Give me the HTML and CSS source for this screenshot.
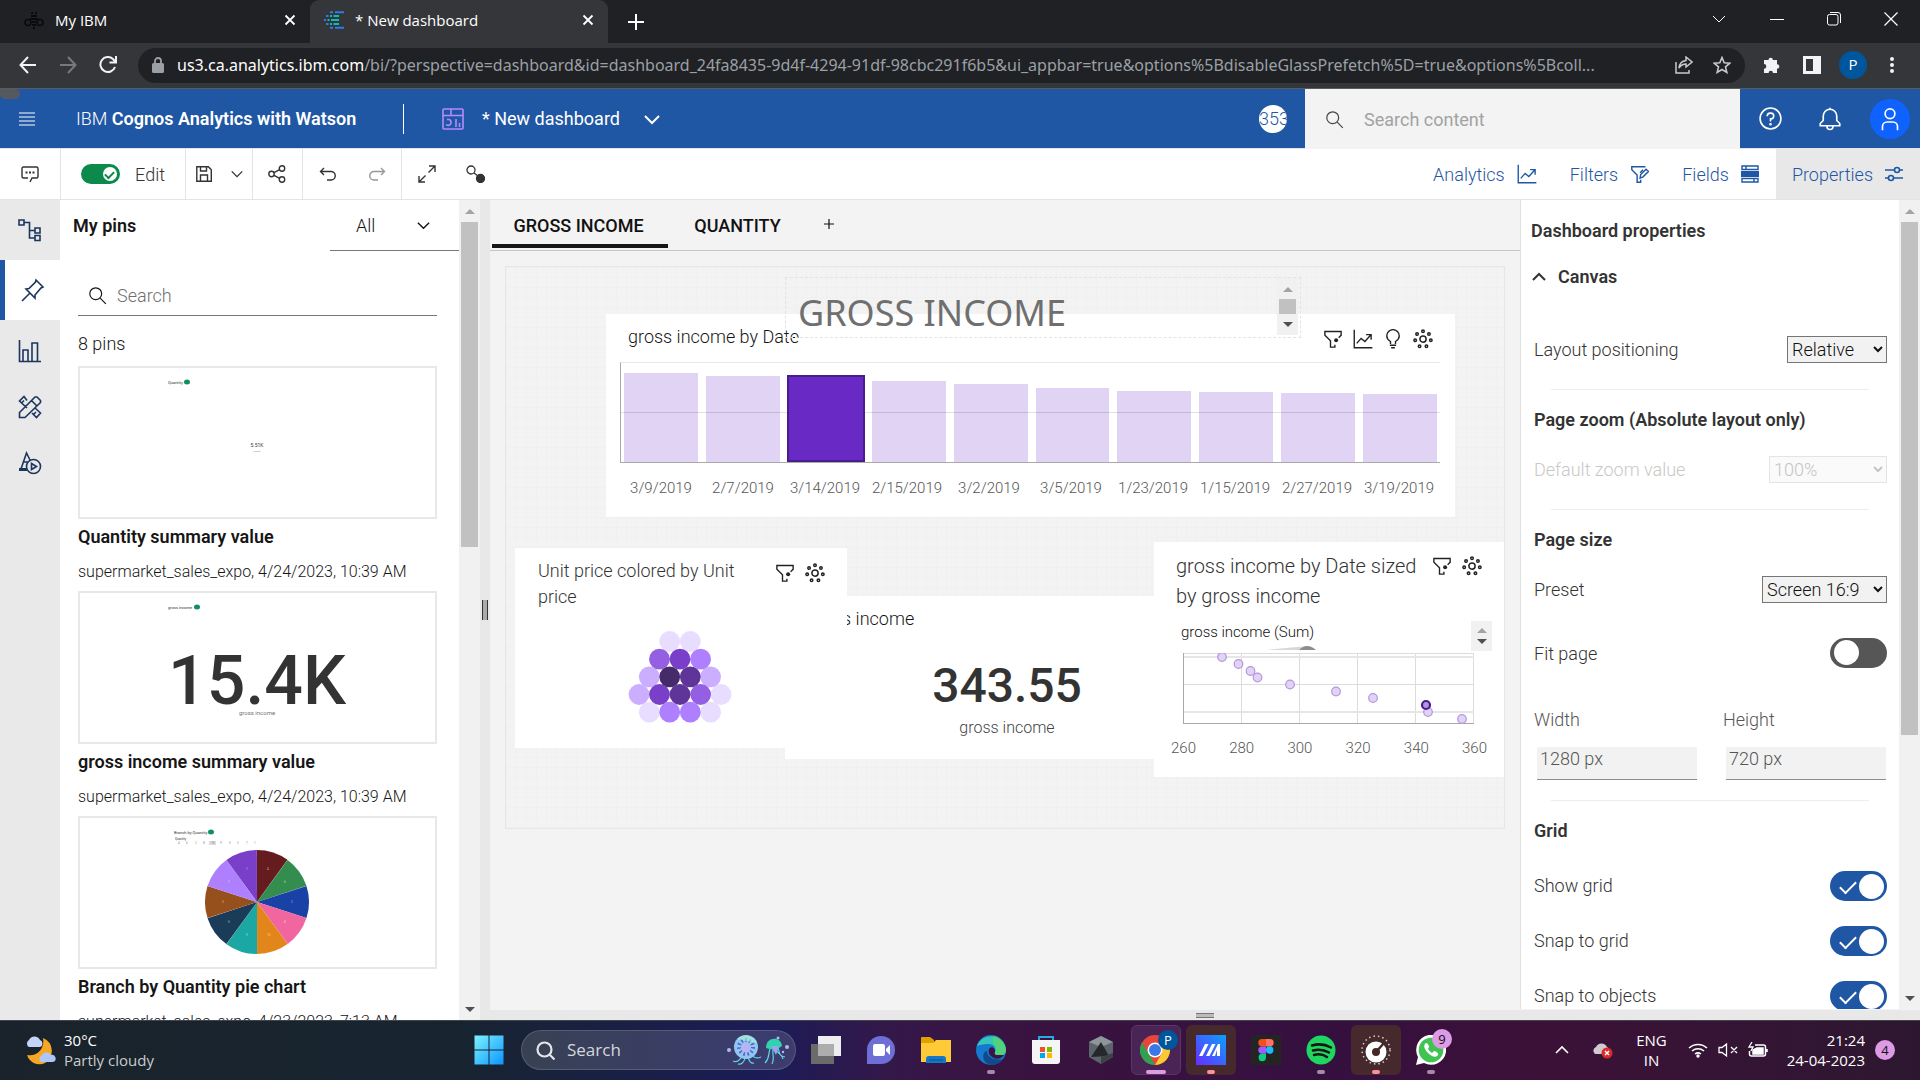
FILE: index.html
```html
<!DOCTYPE html>
<html lang="en">
<head>
<meta charset="utf-8">
<title>New dashboard</title>
<link rel="stylesheet" href="styles.css">
</head>
<body>
<svg class="defs" aria-hidden="true">
  <symbol id="i-close" viewBox="0 0 12 12"><path d="M1.500 1.500l9 9M10.500 1.500l-9 9" stroke="currentColor" stroke-width="1.800" fill="none"/></symbol>
  <symbol id="i-down" viewBox="0 0 16 16"><path d="M2 5l6 6 6-6" fill="none" stroke="currentColor" stroke-width="1.500"/></symbol>
  <symbol id="i-search" viewBox="0 0 32 32"><g fill="none" stroke="currentColor" stroke-width="2"><circle cx="13" cy="13" r="10"/><path d="M20.500 20.500L30 30"/></g></symbol>
  <symbol id="i-filterdot" viewBox="0 0 32 32"><path d="M29 11V4H3v6l9 9v10h7v-4M29 10l-4 4" fill="none" stroke="currentColor" stroke-width="2.200"/><circle cx="21" cy="18" r="3.200" fill="currentColor"/></symbol>
  <symbol id="i-trend" viewBox="0 0 32 32"><g fill="none" stroke="currentColor" stroke-width="2.200"><path d="M2 1v29h29"/><path d="M6 23l7-8 6 5 9-10M21 9h8v8"/></g></symbol>
  <symbol id="i-bulb" viewBox="0 0 32 32"><g fill="none" stroke="currentColor" stroke-width="2.200"><path d="M12 24v-4c-3-2-6-5-6-9a10 10 0 0 1 20 0c0 4-3 7-6 9v4M11 26h10M13 30h6"/></g></symbol>
  <symbol id="i-settings" viewBox="0 0 32 32"><g fill="none" stroke="currentColor" stroke-width="2.400"><circle cx="16" cy="16" r="5"/><circle cx="16" cy="3.500" r="2"/><circle cx="25.500" cy="8" r="2"/><circle cx="28.500" cy="18" r="2"/><circle cx="21.500" cy="27.500" r="2"/><circle cx="10.500" cy="27.500" r="2"/><circle cx="3.500" cy="18" r="2"/><circle cx="6.500" cy="8" r="2"/></g></symbol>
</svg>

<header class="tabstrip">
  <div class="btab">
    <svg width="20" height="18" viewBox="0 0 20 18" fill="none" stroke="#0a0a0a" stroke-width="1.500"><circle cx="4" cy="11.500" r="3"/><circle cx="16" cy="11.500" r="3"/><path d="M7 2h2M11 2h2M7 5h6M6 8h8M8 11h4M8 14h4M9 17h2" stroke-width="1.800"/></svg>
    <span class="btab-title">My IBM</span>
    <button class="plain" aria-label="Close tab"><svg width="12" height="12"><use href="#i-close"/></svg></button>
  </div>
  <div class="btab active">
    <svg width="20" height="18" viewBox="0 0 20 18"><path d="M6 1.200h3M11 1.200h9M2 5h2.500M0 9h2M2 13h2.500M6 16.800h3M11 16.800h9" stroke="#2f7de1" stroke-width="2"/><path d="M6 5h2M9.500 5H15M3.500 9h2M7 9h8M6 13h2M9.500 13H15" stroke="#08bdba" stroke-width="2"/></svg>
    <span class="btab-title">* New dashboard</span>
    <button class="plain" aria-label="Close tab"><svg width="12" height="12"><use href="#i-close"/></svg></button>
  </div>
  <button class="plain newtab" aria-label="New tab"><svg width="16" height="16" viewBox="0 0 16 16"><path d="M8 0v16M0 8h16" stroke="currentColor" stroke-width="2"/></svg></button>
  <div class="wincontrols">
    <button class="plain" aria-label="Search tabs"><svg width="16" height="16" viewBox="0 0 16 16"><path d="M2 5l6 6 6-6" fill="none" stroke="currentColor"/></svg></button>
    <button class="plain" aria-label="Minimize"><svg width="14" height="14" viewBox="0 0 14 14"><path d="M0 7.500h14" stroke="currentColor"/></svg></button>
    <button class="plain" aria-label="Restore"><svg width="14" height="14" viewBox="0 0 14 14" fill="none" stroke="currentColor"><rect x=".5" y="2.500" width="10.500" height="10.500" rx="2"/><path d="M3 .5h8a2.500 2.500 0 0 1 2.500 2.500v8"/></svg></button>
    <button class="plain" aria-label="Close"><svg width="14" height="14" viewBox="0 0 14 14"><path d="M.5.500l13 13M13.500.5l-13 13" stroke="currentColor" stroke-width="1.200"/></svg></button>
  </div>
</header>

<nav class="addressrow">
  <button class="plain" aria-label="Back"><svg width="18" height="18" viewBox="0 0 18 18" fill="none" stroke="#f1f3f4" stroke-width="2"><path d="M17 9H2M9 1L1.500 9 9 17"/></svg></button>
  <button class="plain" aria-label="Forward"><svg width="18" height="18" viewBox="0 0 18 18" fill="none" stroke="#77797d" stroke-width="2"><path d="M1 9h15M9 1l7.500 8L9 17"/></svg></button>
  <button class="plain" aria-label="Reload"><svg width="18" height="18" viewBox="0 0 18 18" fill="none" stroke="#f1f3f4" stroke-width="2"><path d="M16 11a7.500 7.500 0 1 1-2-8l2.500 3M17 0v6.500h-6.500"/></svg></button>
  <div class="omnibox">
    <svg width="12" height="16" viewBox="0 0 12 16"><rect y="6" width="12" height="10" rx="1.500" fill="#9aa0a6"/><path d="M3 7V4a3 3 0 0 1 6 0v3" fill="none" stroke="#9aa0a6" stroke-width="1.800"/></svg>
    <div class="url"><b>us3.ca.analytics.ibm.com</b>/bi/?perspective=dashboard&amp;id=dashboard_24fa8435-9d4f-4294-91df-98cbc291f6b5&amp;ui_appbar=true&amp;options%5BdisableGlassPrefetch%5D=true&amp;options%5Bcoll...</div>
    <svg width="18" height="18" viewBox="0 0 18 18" fill="none" stroke="#c7c9cc" stroke-width="1.500"><path d="M1 6v11h13v-3M11 1l6 5-6 5V8c-3 0-5 1-7 4 .5-5 3-7 7-7.500z"/></svg>
    <svg width="18" height="18" viewBox="0 0 18 18" fill="none" stroke="#c7c9cc" stroke-width="1.600"><path d="M9 1.500l2.200 5.200 5.600.5-4.300 3.700 1.300 5.500L9 13.500l-4.800 2.900 1.300-5.500L1.200 7.200l5.600-.5z"/></svg>
  </div>
  <svg width="18" height="18" viewBox="0 0 18 18" fill="#f1f3f4"><path d="M1 4h4.500a2.200 2.200 0 1 1 4.400 0H14v4.200a2.300 2.300 0 1 1 0 4.600V17h-4a2.200 2.200 0 0 0-4.400 0H1v-4.300a2.300 2.300 0 0 0 0-4.600z"/></svg>
  <svg width="18" height="18" viewBox="0 0 18 18"><path d="M1.500 1.500h15v15h-15z" fill="none" stroke="#f1f3f4" stroke-width="3"/><path d="M10 1h7v16h-7z" fill="#f1f3f4"/></svg>
  <span class="profile">P</span>
  <svg width="6" height="18" viewBox="0 0 6 18" fill="#f1f3f4"><circle cx="3" cy="3" r="2"/><circle cx="3" cy="9" r="2"/><circle cx="3" cy="15" r="2"/></svg>
</nav>

<header class="appbar">
  <button class="plain menu" aria-label="Open menu"><svg width="16" height="14" viewBox="0 0 16 14"><path d="M0 1h16M0 5h16M0 9h16M0 13h16" stroke="#fff" stroke-width="1.200"/></svg></button>
  <div class="brand">IBM <b>Cognos Analytics with Watson</b></div>
  <div class="crumb">
    <svg width="22" height="22" viewBox="0 0 22 22" fill="none" stroke="#b48bff" stroke-width="1.600"><rect x="1" y="1" width="20" height="20" rx="1"/><path d="M1 7.500h20M9 1v6.500M5 11.500h2a3 3 0 1 1-3 5M14 11v8M17.500 15v4"/></svg>
    <span>* New dashboard</span>
    <svg width="18" height="18" viewBox="0 0 18 18" fill="none" stroke="#fff" stroke-width="2"><path d="M2 6l7 7 7-7"/></svg>
  </div>
  <span class="trial">353</span>
  <label class="globalsearch"><svg width="19" height="19"><use href="#i-search"/></svg><input type="text" placeholder="Search content" aria-label="Search content"></label>
  <div class="appicons">
    <button class="plain" aria-label="Help"><svg width="23" height="23" viewBox="0 0 32 32" fill="none" stroke="#fff" stroke-width="2.200"><circle cx="16" cy="16" r="14.500"/><path d="M11.500 13v-1a4 4 0 0 1 4-3.500h1a4 4 0 0 1 0 8H16V20"/><circle cx="16" cy="24" r=".8"/></svg></button>
    <button class="plain" aria-label="Notifications"><svg width="24" height="24" viewBox="0 0 32 32" fill="none" stroke="#fff" stroke-width="2.200"><path d="M16 1v3M3 25v-3l4-4v-6a9 9 0 0 1 18 0v6l4 4v3zM12 25v1a4 4 0 0 0 8 0v-1"/></svg></button>
    <button class="plain user" aria-label="Account"><svg width="24" height="24" viewBox="0 0 32 32" fill="none" stroke="#fff" stroke-width="2.200"><circle cx="16" cy="9" r="6.500"/><path d="M6 31v-5a6 6 0 0 1 6-6h8a6 6 0 0 1 6 6v5"/></svg></button>
  </div>
</header>

<div class="toolbar">
  <div class="tgroup comment"><button class="plain" aria-label="Comments"><svg width="18" height="18" viewBox="0 0 18 18" fill="none" stroke="currentColor" stroke-width="1.400"><path d="M9 17l2-4h4.500a1.500 1.500 0 0 0 1.500-1.500v-8A1.500 1.500 0 0 0 15.500 2h-13A1.500 1.500 0 0 0 1 3.500v8A1.500 1.500 0 0 0 2.500 13H7"/><path d="M4.500 7.500h2M8 7.500h2M11.500 7.500h2" stroke-width="2"/></svg></button></div>
  <label class="tgroup edit"><input type="checkbox" class="editswitch" checked><span>Edit</span></label>
  <div class="tgroup save">
    <button class="plain" aria-label="Save"><svg width="16" height="16" viewBox="0 0 16 16" fill="none" stroke="currentColor" stroke-width="1.400"><path d="M.8.8h11.500l3 3v11.500H.8zM4.500 1v4h6V1M4.500 15V9h7v6"/></svg></button>
    <button class="plain" aria-label="Save options"><svg width="14" height="14"><use href="#i-down"/></svg></button>
  </div>
  <div class="tgroup share"><button class="plain" aria-label="Share"><svg width="18" height="18" viewBox="0 0 18 18" fill="none" stroke="currentColor" stroke-width="1.400"><circle cx="14" cy="3.500" r="2.700"/><circle cx="3.500" cy="9" r="2.700"/><circle cx="14" cy="14.500" r="2.700"/><path d="M6 7.700l5.600-3M6 10.300l5.600 3"/></svg></button></div>
  <div class="tgroup undo">
    <button class="plain" aria-label="Undo"><svg width="18" height="14" viewBox="0 0 18 14" fill="none" stroke="currentColor" stroke-width="1.400"><path d="M5 1L1.500 4.500 5 8M1.500 4.500H12a4 4 0 0 1 0 8.500H8"/></svg></button>
    <button class="plain faded" aria-label="Redo"><svg width="18" height="14" viewBox="0 0 18 14" fill="none" stroke="currentColor" stroke-width="1.400"><path d="M13 1l3.500 3.500L13 8M16.500 4.500H6A4 4 0 0 0 6 13h4"/></svg></button>
  </div>
  <div class="tgroup last">
    <button class="plain" aria-label="Full screen"><svg width="18" height="18" viewBox="0 0 18 18" fill="none" stroke="currentColor" stroke-width="1.400"><path d="M11 1h6v6M17 1l-6.500 6.500M7 17H1v-6M1 17l6.500-6.500"/></svg></button>
    <button class="plain" aria-label="Brushing"><svg width="20" height="18" viewBox="0 0 20 18" fill="none" stroke="currentColor" stroke-width="1.300"><circle cx="5" cy="5" r="4"/><path d="M8 8l4 3"/><circle cx="14.500" cy="13.500" r="4" fill="currentColor"/></svg></button>
  </div>
  <div class="panels">
    <button class="plain">Analytics <svg width="20" height="20"><use href="#i-trend"/></svg></button>
    <button class="plain">Filters <svg width="19" height="19" viewBox="0 0 32 32" fill="none" stroke="currentColor" stroke-width="2.400"><path d="M26 3H3v5l9 9v12h6v-4M17 22l1-6L27 7l4 4-9 9zM17 13l5-5"/></svg></button>
    <button class="plain">Fields <svg width="18" height="18" viewBox="0 0 18 18" fill="none" stroke="currentColor" stroke-width="1.400"><path d="M1 1h16v3.500H1zM1 13.500h16V17H1zM5 1v3.500M13 13.500V17"/><path d="M0 6h18v6H0z" fill="currentColor" stroke="none"/></svg></button>
    <button class="plain on">Properties <svg width="18" height="18" viewBox="0 0 18 18" fill="none" stroke="currentColor" stroke-width="1.600"><path d="M0 5h9M15 5h3M0 13h3M9 13h9"/><circle cx="12" cy="5" r="2.500"/><circle cx="6" cy="13" r="2.500"/></svg></button>
  </div>
</div>

<main class="workspace">
  <nav class="rail">
    <button class="plain first" aria-label="Sources"><svg width="24" height="24" viewBox="0 0 24 24" fill="none" stroke="currentColor" stroke-width="1.600"><path d="M1 2h5v5H1zM17 10h5v5h-5zM17 17.500h5v5h-5zM6 4.500h5.500V20H17M11.500 12.500H17"/></svg></button>
    <button class="plain active" aria-label="Pins"><svg width="24" height="24" viewBox="0 0 24 24" fill="none" stroke="currentColor" stroke-width="1.600"><path d="M15 2l7 7-2 1-6 7v3L5 11l3-.5L14.500 4zM9.500 14.500L1 23"/></svg></button>
    <button class="plain" aria-label="Visualizations"><svg width="24" height="24" viewBox="0 0 24 24" fill="none" stroke="currentColor" stroke-width="1.600"><path d="M1.500 1v21.500H23M5 22V11h5v11M14 22V4h5.500v18"/></svg></button>
    <button class="plain" aria-label="Widgets"><svg width="24" height="24" viewBox="0 0 24 24" fill="none" stroke="currentColor" stroke-width="1.600"><path d="M1.500 22.500v-5L17 2h2l3.500 3.500v2L7 22.500zM13.500 5.500l5 5M9 5.500L6 1.500 1.500 6 9 13M4 7.500l2-2M14 18l4.500 4.500L22.500 18 17 13M16 19l2-2"/></svg></button>
    <button class="plain" aria-label="Animation"><svg width="24" height="24" viewBox="0 0 24 24" fill="none" stroke="currentColor" stroke-width="1.600"><circle cx="15.500" cy="15.500" r="7"/><path d="M13.500 12.500v6l5-3zM3 18L8.500 2 12 9M6 11h4"/><path d="M1 18.500h8" stroke-width="3"/></svg></button>
  </nav>

  <section class="pins">
    <div class="pins-body">
      <div class="pins-head"><h2>My pins</h2><button class="plain pinfilter"><span>All</span><svg width="15" height="15"><use href="#i-down"/></svg></button></div>
      <label class="pinsearch"><svg width="19" height="19"><use href="#i-search"/></svg><input type="text" placeholder="Search" aria-label="Search pins"></label>
      <p class="count">8 pins</p>
      <article class="pin">
        <svg class="thumb" viewBox="0 0 355 149"><text x="88" y="16" font-size="4">Quantity</text><ellipse cx="107" cy="14" rx="3" ry="2.500" fill="#10915a"/><text x="177" y="79" font-size="5" text-anchor="middle">5.51K</text><text x="177" y="84" font-size="2" text-anchor="middle" opacity=".6">Quantity</text></svg>
        <h3>Quantity summary value</h3><p>supermarket_sales_expo, 4/24/2023, 10:39 AM</p>
      </article>
      <article class="pin">
        <svg class="thumb" viewBox="0 0 355 149"><text x="88" y="16" font-size="4">gross income</text><ellipse cx="117" cy="14" rx="3" ry="2.500" fill="#10915a"/><text x="177" y="111" font-size="68" font-weight="500" text-anchor="middle">15.4K</text><text x="177" y="122" font-size="6" text-anchor="middle" opacity=".7">gross income</text></svg>
        <h3>gross income summary value</h3><p>supermarket_sales_expo, 4/24/2023, 10:39 AM</p>
      </article>
      <article class="pin">
        <svg class="thumb" viewBox="0 0 355 149"><text x="94" y="16" font-size="4">Branch by Quantity</text><ellipse cx="131" cy="14" rx="3" ry="2.500" fill="#10915a"/><text x="95" y="22" font-size="3">Quantity</text><rect x="129" y="23" width="7" height="4" fill="#ddd"/>
          <g font-size="3" opacity=".6"><text x="98" y="26">4</text><text x="106" y="26">6</text><text x="115" y="26">2</text><text x="123" y="26">8</text><text x="131" y="26">10</text><text x="140" y="26">9</text><text x="149" y="26">5</text><text x="157" y="26">3</text><text x="166" y="26">7</text><text x="174" y="26">1</text></g>
          <g class="pie" transform="translate(177 84) rotate(-90)">
            <circle r="26" pathLength="10" stroke="#651c1f"/>
            <circle r="26" pathLength="10" stroke="#338d4f" transform="rotate(36)"/>
            <circle r="26" pathLength="10" stroke="#1a41a6" transform="rotate(72)"/>
            <circle r="26" pathLength="10" stroke="#f1669f" transform="rotate(108)"/>
            <circle r="26" pathLength="10" stroke="#e2851a" transform="rotate(144)"/>
            <circle r="26" pathLength="10" stroke="#1ba8a4" transform="rotate(180)"/>
            <circle r="26" pathLength="10" stroke="#1b3c58" transform="rotate(216)"/>
            <circle r="26" pathLength="10" stroke="#95501c" transform="rotate(252)"/>
            <circle r="26" pathLength="10" stroke="#ae7fff" transform="rotate(288)"/>
            <circle r="26" pathLength="10" stroke="#7a3fc9" transform="rotate(324)"/>
          </g>
          <g class="pielabels" font-size="3"><text x="187" y="52">4</text><text x="204" y="65">6</text><text x="211" y="85">2</text><text x="204" y="105">8</text><text x="187" y="118">10</text><text x="166" y="118">9</text><text x="148" y="105">5</text><text x="142" y="85">3</text><text x="148" y="65">7</text><text x="166" y="52">1</text></g>
        </svg>
        <h3>Branch by Quantity pie chart</h3><p>supermarket_sales_expo, 4/23/2023, 7:13 AM</p>
      </article>
    </div>
    <div class="scroll pinscroll"><i class="up"></i><span></span><i class="dn"></i></div>
  </section>
  <div class="splitter"></div>

  <div class="stage">
    <div class="stage-row">
      <section class="canvas">
        <div class="ctabs"><button class="plain ctab sel">GROSS INCOME</button><button class="plain ctab">QUANTITY</button><button class="plain add" aria-label="Add tab"><svg width="10" height="10" viewBox="0 0 10 10"><path d="M5 0v10M0 5h10" stroke="currentColor" stroke-width="1.200"/></svg></button></div>
        <div class="board">
          <article class="widget w-bars">
            <h4>gross income by Date</h4>
            <div class="wicons"><svg><use href="#i-filterdot"/></svg><svg><use href="#i-trend"/></svg><svg><use href="#i-bulb"/></svg><svg><use href="#i-settings"/></svg></div>
            <div class="plot">
              <div style="height:89px"></div><div style="height:86px"></div><div class="picked" style="height:87px"></div><div style="height:81px"></div><div style="height:78px"></div><div style="height:74px"></div><div style="height:71px"></div><div style="height:70px"></div><div style="height:69px"></div><div style="height:68px"></div>
            </div>
            <div class="xlabels"><span>3/9/2019</span><span>2/7/2019</span><span>3/14/2019</span><span>2/15/2019</span><span>3/2/2019</span><span>3/5/2019</span><span>1/23/2019</span><span>1/15/2019</span><span>2/27/2019</span><span>3/19/2019</span></div>
          </article>
          <article class="widget w-title"><h1>GROSS INCOME</h1><div class="scroll"><i class="up"></i><span></span><i class="dn"></i></div></article>
          <article class="widget w-kpi"><h4>gross income</h4><strong>343.55</strong><p>gross income</p></article>
          <article class="widget w-hive">
            <h4>Unit price colored by Unit price</h4>
            <div class="wicons"><svg><use href="#i-filterdot"/></svg><svg><use href="#i-settings"/></svg></div>
            <svg class="hive" width="104" height="92" viewBox="0 0 104 92">
              <g fill="#e8dcff"><circle cx="41.700" cy="10.500" r="10.400"/><circle cx="62.300" cy="10.500" r="10.400"/><circle cx="93" cy="63.500" r="10.400"/><circle cx="21.300" cy="81.200" r="10.400"/><circle cx="82.600" cy="81.200" r="10.400"/></g>
              <g fill="#cbaeff"><circle cx="21.300" cy="45.800" r="10.400"/><circle cx="82.600" cy="45.800" r="10.400"/><circle cx="11" cy="63.500" r="10.400"/></g>
              <g fill="#ae7fff"><circle cx="72.600" cy="28.200" r="10.400"/><circle cx="41.700" cy="81.200" r="10.400"/><circle cx="62.300" cy="81.200" r="10.400"/></g>
              <g fill="#945fe2"><circle cx="31.500" cy="28.200" r="10.400"/><circle cx="72.600" cy="63.500" r="10.400"/></g>
              <g fill="#7a3fc9"><circle cx="52" cy="28.200" r="10.400"/><circle cx="31.500" cy="63.500" r="10.400"/></g>
              <g fill="#60359a"><circle cx="62.300" cy="45.800" r="10.400"/><circle cx="52" cy="63.500" r="10.400"/></g>
              <circle cx="41.700" cy="45.800" r="10.400" fill="#462b6b"/>
            </svg>
          </article>
          <article class="widget w-scatter">
            <h4>gross income by Date sized by gross income</h4>
            <div class="wicons"><svg><use href="#i-filterdot"/></svg><svg><use href="#i-settings"/></svg></div>
            <div class="legend"><span>gross income (Sum)</span><svg width="50" height="4" viewBox="0 0 50 4"><path d="M0 4L42 0v4z" fill="#d8d8d8"/><path d="M33 4q8-8 17 0z" fill="#8d8d8d"/></svg></div>
            <div class="scroll"><i class="up"></i><i class="dn"></i></div>
            <svg class="dots" width="292" height="71" viewBox="0 0 292 71">
              <g stroke="#dcdcdc" fill="none"><path d="M58.500 0v70M116.500 0v70M174.500 0v70M232.500 0v70M290.500 0v70M0 .5h291M0 31.500h291"/><path d="M0 4h291M0 59h291" stroke-width="2" stroke="#e6e6e6"/></g>
              <path d="M.5 0v70M0 70.500h291" stroke="#a8a8a8" fill="none"/>
              <g fill="#e0d3f3" stroke="#b594e2" stroke-width="1.200"><circle cx="39" cy="4" r="4.300"/><circle cx="55.500" cy="11" r="4.300"/><circle cx="67.500" cy="18" r="4.300"/><circle cx="74.500" cy="24.500" r="4.300"/><circle cx="107" cy="31.500" r="4.300"/><circle cx="153" cy="38.500" r="4.300"/><circle cx="190" cy="45" r="4.300"/><circle cx="245" cy="59" r="4.300"/><circle cx="279" cy="66" r="4.300"/></g>
              <circle cx="243" cy="52" r="4" fill="#b594e2" stroke="#491d8b" stroke-width="2.200"/>
            </svg>
            <div class="xticks"><span>260</span><span>280</span><span>300</span><span>320</span><span>340</span><span>360</span></div>
          </article>
        </div>
      </section>

      <aside class="props">
        <div class="props-body">
          <h2>Dashboard properties</h2>
          <h2 class="acc"><svg width="16" height="16" viewBox="0 0 16 16"><path d="M2 11l6-6 6 6" fill="none" stroke="currentColor" stroke-width="2"/></svg>Canvas</h2>
          <div class="row gap-a"><label for="lp">Layout positioning</label><select id="lp" class="s1"><option>Relative</option></select></div>
          <hr>
          <h3>Page zoom (Absolute layout only)</h3>
          <div class="row off"><label for="dz">Default zoom value</label><select id="dz" class="s2" disabled><option>100%</option></select></div>
          <hr>
          <h3>Page size</h3>
          <div class="row"><label for="ps">Preset</label><select id="ps" class="s3"><option>Screen 16:9</option></select></div>
          <div class="row fit"><label for="fp">Fit page</label><input id="fp" type="checkbox" class="switch"></div>
          <div class="sizes"><div><label for="pw">Width</label><input id="pw" type="text" value="1280 px"></div><div><label for="ph">Height</label><input id="ph" type="text" value="720 px"></div></div>
          <hr class="tight">
          <h3>Grid</h3>
          <div class="row t"><label for="sg">Show grid</label><input id="sg" type="checkbox" class="switch" checked></div>
          <div class="row t"><label for="sn">Snap to grid</label><input id="sn" type="checkbox" class="switch" checked></div>
          <div class="row t"><label for="so">Snap to objects</label><input id="so" type="checkbox" class="switch" checked></div>
        </div>
        <div class="scroll propscroll"><i class="up"></i><span></span><i class="dn"></i></div>
      </aside>
    </div>
    <div class="drawer"><i></i></div>
  </div>
</main>

<footer class="taskbar">
  <div class="weather">
    <svg width="32" height="30" viewBox="0 0 32 30"><path d="M19 3a14 14 0 0 1 2 25A13 13 0 0 1 3 20c10 2 18-6 16-17z" fill="#f5a623"/><path d="M5 12a4 4 0 0 1 0-7 6 6 0 0 1 11 0 3.700 3.700 0 0 1 0 7z" fill="#c3d4f7"/><path d="M17 27a4 4 0 0 1 1-7 5 5 0 0 1 9 0 3.500 3.500 0 0 1 2 7z" fill="#aec6f5"/></svg>
    <div>30°C<span>Partly cloudy</span></div>
  </div>
  <div class="apps">
    <button class="app" aria-label="Start"><svg width="30" height="30" viewBox="0 0 30 30"><defs><linearGradient id="gw" x1="0" y1="0" x2="1" y2="1"><stop offset="0" stop-color="#7df3ff"/><stop offset="1" stop-color="#0b95ff"/></linearGradient></defs><path d="M.5.500h14v14H.5zM15.500.5h14v14h-14zM.5 15.500h14v14H.5zM15.500 15.500h14v14h-14z" fill="url(#gw)"/></svg></button>
    <label class="winsearch">
      <svg width="19" height="19" viewBox="0 0 19 19" fill="none" stroke="#e4e6ea" stroke-width="2.200"><circle cx="8.500" cy="8.500" r="7"/><path d="M13.500 13.500l5 5"/></svg>
      <input type="text" placeholder="Search" aria-label="Windows search">
      <svg width="64" height="32" viewBox="0 0 64 32"><g fill="none" stroke="#5fd3e8" stroke-width="1.200"><path d="M16 22c-2 4-5 7-9 5M19 23c0 5-4 8-7 7M22 23c1 4 3 7 6 6M25 20c3 4 6 5 10 3M44 15c-2 5 0 9-5 14M47 15c-1 6 2 9-1 15M50 14c0 6 6 5 7 11M52 14c2 4 0 8 7 9"/></g><ellipse cx="20" cy="13" rx="12" ry="12" fill="#8fc7f2"/><ellipse cx="20" cy="13" rx="7" ry="7" fill="none" stroke="#5b5fc4" stroke-width="4" stroke-dasharray="1.500 2.500"/><circle cx="20" cy="14" r="4.500" fill="#b9b3f5"/><path d="M11 5a12 12 0 0 1 20 4z" fill="#a9f3cf" opacity=".6"/><path d="M40 14c0-12 15-12 16-2-5 4-11 4-16 2z" fill="#2fd3b0"/><path d="M45 12h8l-3 9z" fill="#9aa5f0"/><g fill="#b6b7e8"><circle cx="3" cy="16" r="2"/><circle cx="52" cy="4" r="1.500"/><circle cx="61" cy="13" r="2"/><circle cx="57" cy="18" r="1.200"/></g></svg>
    </label>
    <button class="app" aria-label="Task view"><svg width="30" height="28" viewBox="0 0 30 28"><path d="M0 8h23v20H0z" fill="#6b6b6b"/><path d="M7 0h23v20H7z" fill="#eee"/><path d="M7 8h16v12H7z" fill="#adadad"/></svg></button>
    <button class="app" aria-label="Chat"><svg width="30" height="30" viewBox="0 0 30 30"><path d="M1 29V15a14 14 0 1 1 14 14z" fill="#6d6fd6"/><rect x="7" y="9" width="12" height="12" rx="2" fill="#fff"/><path d="M20 14l4-4v10l-4-4z" fill="#fff"/></svg></button>
    <button class="app" aria-label="File Explorer"><svg width="30" height="28" viewBox="0 0 30 28"><path d="M0 2q0-1 1-1h8l4 3v4H0z" fill="#e0a100"/><path d="M0 7h12l3-3h15v22H0z" fill="#ffca38"/><path d="M5 27v-4q0-3 3-3h14q3 0 3 3v4z" fill="#1378c8"/><path d="M8 24h14" stroke="#0b4f8a"/></svg></button>
    <button class="app run" aria-label="Edge"><svg width="30" height="30" viewBox="0 0 30 30"><circle cx="15" cy="15" r="15" fill="#1479cf"/><path d="M1 11A15 15 0 0 1 30 15c0 6-7 7-12 4 3-4 1-10-6-10-5 0-9 1-11 2z" fill="#36c6b8"/><path d="M17 1a15 15 0 0 1 13 14c0 6-7 7-12 4 4-4 2-9-1-11z" fill="#5bd667" opacity=".75"/><path d="M11 16c0 6 6 10 16 8a15 15 0 0 1-12 6C5 28 6 16 11 16z" fill="#114a8b"/><path d="M13 14c2-3 6-2 6 2 0 2-1 3 1 4h8c-2 4-8 5-12 2-3-2-4-5-3-8z" fill="#3a1546"/></svg></button>
    <button class="app" aria-label="Store"><svg width="30" height="30" viewBox="0 0 30 30"><path d="M8 6V2h14v4" fill="none" stroke="#27a9e1" stroke-width="2"/><path d="M1 5h28v21q0 3-3 3H4q-3 0-3-3z" fill="#f5f5f5"/><path d="M9 12h5v5H9z" fill="#f25022"/><path d="M16 12h5v5h-5z" fill="#7fba00"/><path d="M9 18h5v5H9z" fill="#00a4ef"/><path d="M16 18h5v5h-5z" fill="#ffb900"/></svg></button>
    <button class="app" aria-label="Armoury"><svg width="28" height="30" viewBox="0 0 28 30"><path d="M14 1l12 6v15l-12 7-12-7V7z" fill="#5d646b"/><path d="M14 1l12 6-12 5L2 7z" fill="#8e959b"/><path d="M14 7l8 14-18 1z" fill="#24272b"/><path d="M14 29V22l12-4v4z" fill="#3c4248"/></svg></button>
    <button class="app tile focus" aria-label="Chrome"><svg width="32" height="30" viewBox="0 0 32 30"><circle cx="15" cy="15" r="15" fill="#e8453c"/><path d="M2 7.500L9 19l6 11A15 15 0 0 1 2 7.500z" fill="#2fa150"/><path d="M15 30l7-12V8h6.300A15 15 0 0 1 15 30z" fill="#fcc934"/><circle cx="15" cy="15" r="7.500" fill="#fff"/><circle cx="15" cy="15" r="6" fill="#3b78e7"/></svg><em class="pbadge">P</em></button>
    <button class="app tile alert" aria-label="MyASUS"><svg width="30" height="30" viewBox="0 0 30 30"><defs><linearGradient id="gm" x1="0" y1="1" x2="1" y2="0"><stop offset="0" stop-color="#6a2cff"/><stop offset="1" stop-color="#0aa0ff"/></linearGradient></defs><path d="M0 0h30v30H0z" fill="url(#gm)"/><path d="M3 21L9 9h3.500L6.500 21zM10 21l6-12h3.500l-6 12zM16 21l6-12h2v12h-3v-6l-2 6z" fill="#fff"/></svg></button>
    <button class="app" aria-label="Figma"><svg width="30" height="30" viewBox="0 0 30 30"><path d="M0 0h30v30H0z" fill="#242424"/><path d="M15 4h-4a3.700 3.700 0 0 0 0 7.400h4z" fill="#f24e1e"/><path d="M15 4h4a3.700 3.700 0 0 1 0 7.400h-4z" fill="#ff7262"/><path d="M15 11.400h-4a3.700 3.700 0 0 0 0 7.400h4z" fill="#a259ff"/><circle cx="18.700" cy="15" r="3.700" fill="#1abcfe"/><path d="M15 18.800h-4a3.700 3.700 0 1 0 4 3.700z" fill="#0acf83"/></svg></button>
    <button class="app run" aria-label="Spotify"><svg width="30" height="30" viewBox="0 0 30 30"><circle cx="15" cy="15" r="14.500" fill="#1ed760"/><path d="M6 10.500q10-3 19 2M7 15.500q9-2 16 2M8 20q7-2 13 2" fill="none" stroke="#161616" stroke-width="2.500" stroke-linecap="round"/></svg></button>
    <button class="app tile alert" aria-label="Clock"><svg width="32" height="30" viewBox="0 0 32 30"><circle cx="16" cy="15" r="14" fill="none" stroke="#d8cfd0" stroke-width="1.500" stroke-dasharray="1.500 3"/><circle cx="16" cy="17" r="10.500" fill="#fff"/><circle cx="16" cy="17" r="4" fill="#442828"/><path d="M16 17L24 8" stroke="#442828" stroke-width="2.500"/></svg></button>
    <button class="app run" aria-label="WhatsApp"><svg width="30" height="30" viewBox="0 0 30 30"><path d="M0 30l2-8A15 15 0 1 1 8 28z" fill="#fff"/><circle cx="15" cy="15" r="12.300" fill="#3fc351"/><path d="M10 8c-3 2-2 6 2 10s8 5 10 2c1-2-3-4-4-4l-2 2c-2-1-3-3-4-4l1-2c0-1-1-4-3-4z" fill="#fff"/></svg><em class="nbadge">9</em></button>
  </div>
  <div class="tray">
    <svg width="14" height="14" viewBox="0 0 14 14"><path d="M1 10l6-6 6 6" fill="none" stroke="#fff" stroke-width="1.600"/></svg>
    <svg class="cloud" width="22" height="18" viewBox="0 0 22 18"><path d="M3 13a4 4 0 0 1 1-7 6 6 0 0 1 11 0 4 4 0 0 1 1 7z" fill="#cfc9d2"/><circle cx="15" cy="12" r="5.500" fill="#d92b2b"/><path d="M13 10l4 4M17 10l-4 4" stroke="#fff" stroke-width="1.500"/></svg>
    <div class="lang">ENG<br>IN</div>
    <svg width="20" height="16" viewBox="0 0 20 16" fill="none" stroke="#fff" stroke-width="1.500"><path d="M1 6a13 13 0 0 1 18 0M4 9a9 9 0 0 1 12 0M7 12a5 5 0 0 1 6 0"/><circle cx="10" cy="14" r="1" fill="#fff"/></svg>
    <svg width="20" height="16" viewBox="0 0 20 16" fill="none" stroke="#fff" stroke-width="1.300"><path d="M1 5.500h3L8.500 2v12L4 10.500H1zM13 5l6 6M19 5l-6 6"/></svg>
    <svg width="20" height="16" viewBox="0 0 20 16" fill="none" stroke="#fff" stroke-width="1.500"><path d="M7 3h8.500a2 2 0 0 1 2 2v7a2 2 0 0 1-2 2h-12a2 2 0 0 1-2-2V9M19 7v3"/><path d="M5 12V8l4-2h6v6z" fill="#fff"/><path d="M4 0L1 5h4L3 9" stroke-width="1.300"/></svg>
    <div class="clock">21:24<br>24-04-2023</div>
    <span class="notif">4</span>
  </div>
</footer>
</body>
</html>
```
FILE: styles.css
```css
* { box-sizing: border-box; }
html, body { height: 100%; margin: 0; }
body {
  display: flex; flex-direction: column; overflow: hidden;
  font-family: Roboto, "Noto Sans", sans-serif; font-size: 18px; font-weight: 300; color: #161616; background: #f3f3f3;
}
h1, h2, h3, h4, p { margin: 0; font-weight: 300; font-size: 18px; }
svg { flex: none; display: block; }
input { font: inherit; color: inherit; border: 0; background: none; outline: 0; padding: 0; min-width: 0; margin: 0; }
.defs { position: absolute; width: 0; height: 0; }
.plain { border: 0; background: none; padding: 0; margin: 0; font: inherit; color: inherit; display: flex; align-items: center; justify-content: center; }

/* browser frame */
.tabstrip, .addressrow, .taskbar { font-family: "Open Sans", "Noto Sans", sans-serif; font-weight: 400; }
.tabstrip { display: flex; flex: none; height: 43px; background: #202124; color: #fff; font-size: 15px; align-items: center; }
.btab { width: 310px; height: 43px; padding: 0 14px 3px 24px; display: flex; align-items: center; gap: 11px; }
.btab.active { width: 298px; background: #35363a; border-radius: 9px 9px 0 0; padding-left: 14px; }
.btab-title { flex: 1; }
.newtab { margin-left: 20px; }
.wincontrols { margin-left: auto; display: flex; gap: 43px; padding: 0 22px 5px 0; }
.addressrow { display: flex; flex: none; height: 46px; background: #35363a; align-items: center; padding: 0 25px 1px 19px; border-bottom: 1px solid #5a5b5f; gap: 22px; }
.omnibox { flex: 1; height: 35px; border-radius: 18px; background: #202124; display: flex; align-items: center; gap: 20px; padding: 0 14px 0 14px; margin: 0 -4px 0 -1px; min-width: 0; }
.url { flex: 1; color: #9aa0a6; font-family: "Noto Sans", sans-serif; font-size: 16px; white-space: nowrap; overflow: hidden; margin-left: -7px; }
.url b { font-weight: 400; color: #fff; }
.profile { width: 28px; height: 28px; border-radius: 50%; background: #00569c; color: #fff; font-size: 15px; line-height: 27px; text-align: center; margin-left: -4px; }

/* application bar */
.appbar { display: flex; flex: none; height: 59px; background: #1f57a4; color: #fff; align-items: center; font-weight: 400; position: relative; }
.appbar::before { content: ""; position: absolute; left: 0; top: 0; width: 20px; height: 10px; border-radius: 0 5px 5px 5px; background: #55585f; }
.menu { width: 54px; }
.brand { padding: 0 42px 0 22px; height: 30px; line-height: 30px; border-right: 1px solid #fff; font-weight: 300; width: 350px; white-space: nowrap; }
.brand b { font-weight: 600; }
.crumb { display: flex; align-items: center; padding-left: 38px; gap: 18px; flex: 1; }
.crumb svg:last-child { margin-left: 5px; }
.trial { width: 28px; height: 28px; border-radius: 50%; background: #fff; color: #1f57a4; line-height: 28px; overflow: hidden; margin-right: 18px; font-weight: 300; }
.globalsearch { width: 435px; height: 60px; margin-bottom: -1px; background: #f3f3f3; color: #444; display: flex; align-items: center; gap: 20px; padding-left: 20px; }
.globalsearch input::placeholder { color: #a2a2a2; }
.globalsearch input { flex: 1; font-weight: 400; }
.appicons { display: flex; align-items: center; width: 180px; justify-content: flex-end; gap: 20px; padding-right: 10px; }
.appicons .plain { width: 40px; height: 40px; }
.user { border-radius: 50%; }
.appicons .user { background: #0f62fe; }

.toolbar { display: flex; flex: none; height: 52px; background: #fff; border-bottom: 1px solid #e4e4e4; border-top: 1px solid #e4e4e4; color: #333; }
.tgroup { display: flex; align-items: center; border-right: 1px solid #e4e4e4; padding: 0 14px; }
.comment { width: 61px; padding: 0 21px; }
.edit { width: 125px; padding: 0 20px; gap: 15px; }
.save { width: 67px; padding: 0 8px 0 10px; justify-content: space-between; }
.share { width: 50px; padding: 0 15px; }
.undo { width: 99px; padding: 0 15px 0 16px; justify-content: space-between; }
.last { border: 0; gap: 30px; padding-left: 16px; }
.faded { opacity: .5; }
.editswitch { appearance: none; width: 40px; height: 20px; border-radius: 10px; background: #0b8a4b; position: relative; }
.editswitch::before { content: ""; position: absolute; right: 3px; top: 3px; width: 14px; height: 14px; border-radius: 50%; background: #fff; }
.editswitch::after { content: ""; position: absolute; right: 6px; top: 7px; width: 7px; height: 4px; border: solid #0b8a4b; border-width: 0 0 2px 2px; transform: rotate(-45deg); }
.panels { margin-left: auto; display: flex; color: #1f57a4; }
.panels .plain { gap: 12px; padding: 0 17px 0 16px; }
.panels .on { background: #e8e8e8; }

/* workspace */
.workspace { flex: 1; display: flex; min-height: 0; }
.rail { width: 60px; background: #e9e9e9; color: #1c355e; flex: none; }
.rail .plain { width: 60px; height: 56px; }
.rail .first { height: 60px; }
.rail .active { height: 60px; background: #fff; border-left: 5px solid #1f57a4; margin-bottom: 3px; }
.pins { display: flex; width: 420px; flex: none; background: #fff; }
.pins-body { flex: 1; overflow: hidden; padding-left: 18px; }
.pins-head { display: flex; justify-content: space-between; height: 51px; margin-left: -5px; }
.pins-head h2 { font-weight: 600; line-height: 51px; }
.pinfilter { width: 129px; border-bottom: 1px solid #777; padding: 0 28px 0 26px; justify-content: space-between; }
.pinsearch { display: flex; align-items: center; gap: 10px; width: 359px; height: 40px; margin-top: 25px; padding-left: 10px; border-bottom: 1px solid #777; }
.pinsearch input { flex: 1; }
.pinsearch input::placeholder { color: #6f6f6f; }
.count { line-height: 30px; margin: 13px 0 7px; }
.pin { height: 225px; width: 359px; }
.thumb { border: 2px solid #e8e8e8; width: 100%; height: 153px; fill: #333; font-weight: 400; }
.pie circle { fill: none; stroke-width: 52; stroke-dasharray: 1 9; }
.pielabels { fill: #fff; opacity: .6; }
.pin h3 { font-weight: 600; line-height: 36px; white-space: nowrap; }
.pin p { font-size: 16px; line-height: 34px; white-space: nowrap; }
.scroll { width: 21px; background: #f1f1f1; display: flex; flex-direction: column; align-items: center; flex: none; }
.scroll span { width: 17px; background: #c1c1c1; }
.scroll i { border: 5px solid transparent; }
.scroll .up { border-bottom-color: #a3a3a3; border-top: 0; margin: 9px 0 8px; }
.scroll .dn { border-top-color: #505050; border-bottom: 0; margin: auto 0 8px; }
.pinscroll span { height: 325px; }
.splitter { width: 10px; background: #e8e8e8; flex: none; display: flex; align-items: center; justify-content: center; }
.splitter::before { content: ""; width: 4px; height: 20px; border: solid #333; border-width: 0 1px; background: #aaa; }
.stage { flex: 1; min-width: 0; display: flex; flex-direction: column; }
.stage-row { flex: 1; min-height: 0; display: flex; }

/* canvas */
.canvas { flex: 1; min-width: 0; }
.ctabs { display: flex; height: 51px; border-bottom: 1px solid #c6c6c6; padding-left: 2px; color: #111; }
.ctab { height: 48px; width: 174px; font-weight: 500; border-bottom: 4px solid transparent; padding-top: 6px; }
.ctab.sel { border-color: #161616; width: 176px; padding-right: 3px; }
.ctab + .ctab { width: 139px; }
.add { margin-left: 17px; height: 48px; }
.board {
  position: relative; margin: 15px 15px 0; height: 563px; border: 1px solid #e6e6e6;
  background: repeating-linear-gradient(90deg, #f0f0f0 0 1px, transparent 1px 10px), repeating-linear-gradient(#f0f0f0 0 1px, transparent 1px 10px);
}
.widget { position: absolute; background: #fff; }
.wicons { position: absolute; display: flex; gap: 10px; color: #222; }
.wicons svg { width: 20px; height: 20px; }
.w-bars { left: 100px; top: 47px; width: 849px; height: 203px; padding: 10px 15px 0 14px; }
.w-bars h4 { line-height: 26px; padding-left: 8px; }
.w-bars .wicons { right: 22px; top: 15px; gap: 10px; }
.plot {
  height: 101px; margin-top: 12px; border: 1px solid #e8e8e8; border-left-color: #aaa; border-bottom-color: #aaa; border-right: 0; display: flex; align-items: flex-end; gap: 8px; padding: 0 3px; position: relative;
}
.plot::after { content: ""; position: absolute; left: 0; right: 0; top: 49px; height: 1px; background: #0000001f; }
.plot div { flex: 1; background: #e0d3f3; }
.plot .picked { background: #6929c4; border: 2px solid #491d8b; margin: 0 -1px; z-index: 1; }
.xlabels { display: flex; margin-top: 14px; }
.xlabels span { flex: 1; text-align: center; font-size: 15px; line-height: 22px; color: #555; }
.w-title { left: 279px; top: 10px; width: 516px; height: 61px; background: none; border: 1px dashed #e4e4e4; display: flex; justify-content: space-between; padding: 0 2px 2px 12px; }
.w-title h1 { font-family: "Noto Sans", "Open Sans", sans-serif; font-weight: 400; font-size: 36px; line-height: 70px; height: 56px; color: #6f6f6f; }
.w-title .up { margin-bottom: 7px; }
.w-title span { height: 15px; }
.w-kpi { left: 279px; top: 329px; width: 369px; height: 163px; text-align: center; }
.w-kpi h4 { text-align: left; padding: 10px 0 0 22px; line-height: 26px; }
.w-kpi strong { display: block; font-weight: 500; font-size: 48px; line-height: 60px; margin: 24px 0 0 75px; color: #333; }
.w-kpi p { font-size: 16px; line-height: 24px; padding-left: 75px; color: #444; }
.w-hive { left: 9px; top: 281px; width: 332px; height: 200px; padding: 10px 23px; color: #333; }
.w-hive h4 { line-height: 26px; width: 214px; }
.w-hive .wicons { right: 22px; top: 15px; }
.hive { margin: 21px 0 0 90px; }
.w-scatter { left: 648px; top: 275px; width: 350px; height: 235px; padding: 9px 0 0 22px; color: #333; }
.w-scatter h4 { font-size: 20px; line-height: 30px; width: 252px; }
.w-scatter .wicons { right: 22px; top: 14px; }
.legend { margin: 10px 0 0 5px; font-size: 15px; line-height: 22px; height: 28px; color: #111; }
.legend svg { margin: 3px 0 0 85px; }
.w-scatter .scroll { position: absolute; left: 317px; top: 79px; height: 30px; width: 21px; justify-content: space-evenly; }
.w-scatter .scroll i { margin: 0; }
.dots { margin: 4px 0 0 7px; }
.xticks { display: flex; justify-content: space-between; width: 316px; margin: 13px 0 0 -5px; font-size: 15px; line-height: 22px; color: #555; }

/* properties */
.props { width: 400px; background: #fff; border-left: 1px solid #e0e0e0; display: flex; flex: none; color: #333; }
.props-body { flex: 1; overflow: hidden; padding: 8px 12px 0 13px; }
.props h2 { font-weight: 600; line-height: 46px; margin-left: -3px; }
.props .acc { display: flex; align-items: center; gap: 11px; }
.props h3 { font-weight: 600; line-height: 40px; margin-top: 10px; }
.row { display: flex; justify-content: space-between; align-items: center; height: 58px; }
.gap-a { margin-top: 20px; }
.off { color: #c8c8c8; }
.props hr { border: 0; border-top: 1px solid #ededed; margin: 11px 18px 0 17px; }
.props select { font: inherit; height: 27px; background-color: #f2f2f2; border: 1px solid #767676; color: #111; padding: 0; }
.props select:disabled { color: #c4c4c4; border-color: #e4e4e4; background-color: #fafafa; opacity: 1; }
.s1 { width: 100px; }
.s2 { width: 118px; }
.s3 { width: 125px; }
.fit { height: 70px; }
.switch { appearance: none; width: 57px; height: 30px; border-radius: 15px; background: #565656; position: relative; }
.switch::before { content: ""; position: absolute; left: 4px; top: 2px; width: 25px; height: 25px; border-radius: 50%; background: #fff; }
.switch:checked { background: #1f57a4; }
.switch:checked::before { left: 29px; top: 3px; }
.switch:checked::after { content: ""; position: absolute; left: 10px; top: 10px; width: 14px; height: 7px; border: solid #fff; border-width: 0 0 2px 2px; transform: rotate(-45deg); }
.sizes { display: flex; gap: 29px; margin-top: 17px; color: #555; }
.sizes div { width: 160px; }
.sizes label { display: block; line-height: 30px; margin-bottom: 12px; }
.sizes input { width: 160px; height: 33px; margin-left: 3px; padding: 0 0 10px 3px; background: #f2f2f2; border-bottom: 1px solid #8d8d8d; }
.props .tight { margin-top: 20px; }
.t { height: 55px; }
.tight + h3 + .t { margin-top: 7px; }
.propscroll span { height: 513px; }
.drawer { height: 11px; flex: none; background: #e8e8e8; display: flex; align-items: center; justify-content: center; border-top: 1px solid #f3f3f3; }
.drawer i { width: 18px; height: 5px; border: solid #777; border-width: 1px 0; background: #bbb; }

/* taskbar */
.taskbar {
  display: flex; flex: none; height: 60px; align-items: center; color: #fff; font-size: 15px; line-height: 20px; border-top: 1px solid #44454a; padding-bottom: 1px;
  background: linear-gradient(90deg, #1a232b 0, #172430 24%, #1b1c58 40%, #33184a 46%, #3a1440 52%, #35103f 70%, #3c1138 80%, #2d1730 100%);
}
.weather { display: flex; width: 464px; padding: 0 0 1px 24px; gap: 8px; align-items: center; flex: none; }
.weather span { display: block; color: #c9cbce; }
.apps { display: flex; gap: 5px; align-items: center; flex: 1; }
.app { width: 50px; height: 50px; flex: none; border: 0; background: none; border-radius: 6px; display: flex; align-items: center; justify-content: center; position: relative; padding: 0; }
.winsearch { width: 275px; height: 40px; flex: none; margin: 0 0 0 2px; border-radius: 20px; display: flex; align-items: center; background: #ffffff24; border: 1px solid #ffffff26; padding: 0 5px 0 14px; gap: 12px; font-size: 17px; }
.winsearch input { flex: 1; }
.winsearch input::placeholder { color: #d5d7dc; }
.tile { background: #45292c; }
.tile.focus { background: #4a2455; border: 1px solid #5b3566; }
.run::after, .alert::after, .focus::after { content: ""; position: absolute; bottom: 1px; left: 21px; width: 8px; height: 4px; border-radius: 2px; background: #a48ca8; }
.alert::after { background: #ff8f95; }
.focus::after { left: 14px; width: 20px; background: #dc9be4; bottom: 0; }
.app em { position: absolute; left: 26px; top: 4px; width: 20px; height: 20px; border-radius: 50%; font: 400 13px/20px "Open Sans", sans-serif; text-align: center; }
.pbadge { background: #00569c; color: #fff; }
.nbadge { background: #dc9be4; color: #111; }
.tray { display: flex; align-items: center; padding: 0 25px 1px 0; flex: none; gap: 10px; }
.cloud { margin-left: 13px; }
.lang { text-align: center; margin: 0 11px 0 12px; }
.clock { text-align: right; margin-left: 9px; }
.notif { width: 20px; height: 20px; border-radius: 50%; background: #dc9be4; color: #111; font-size: 13px; text-align: center; }
```
